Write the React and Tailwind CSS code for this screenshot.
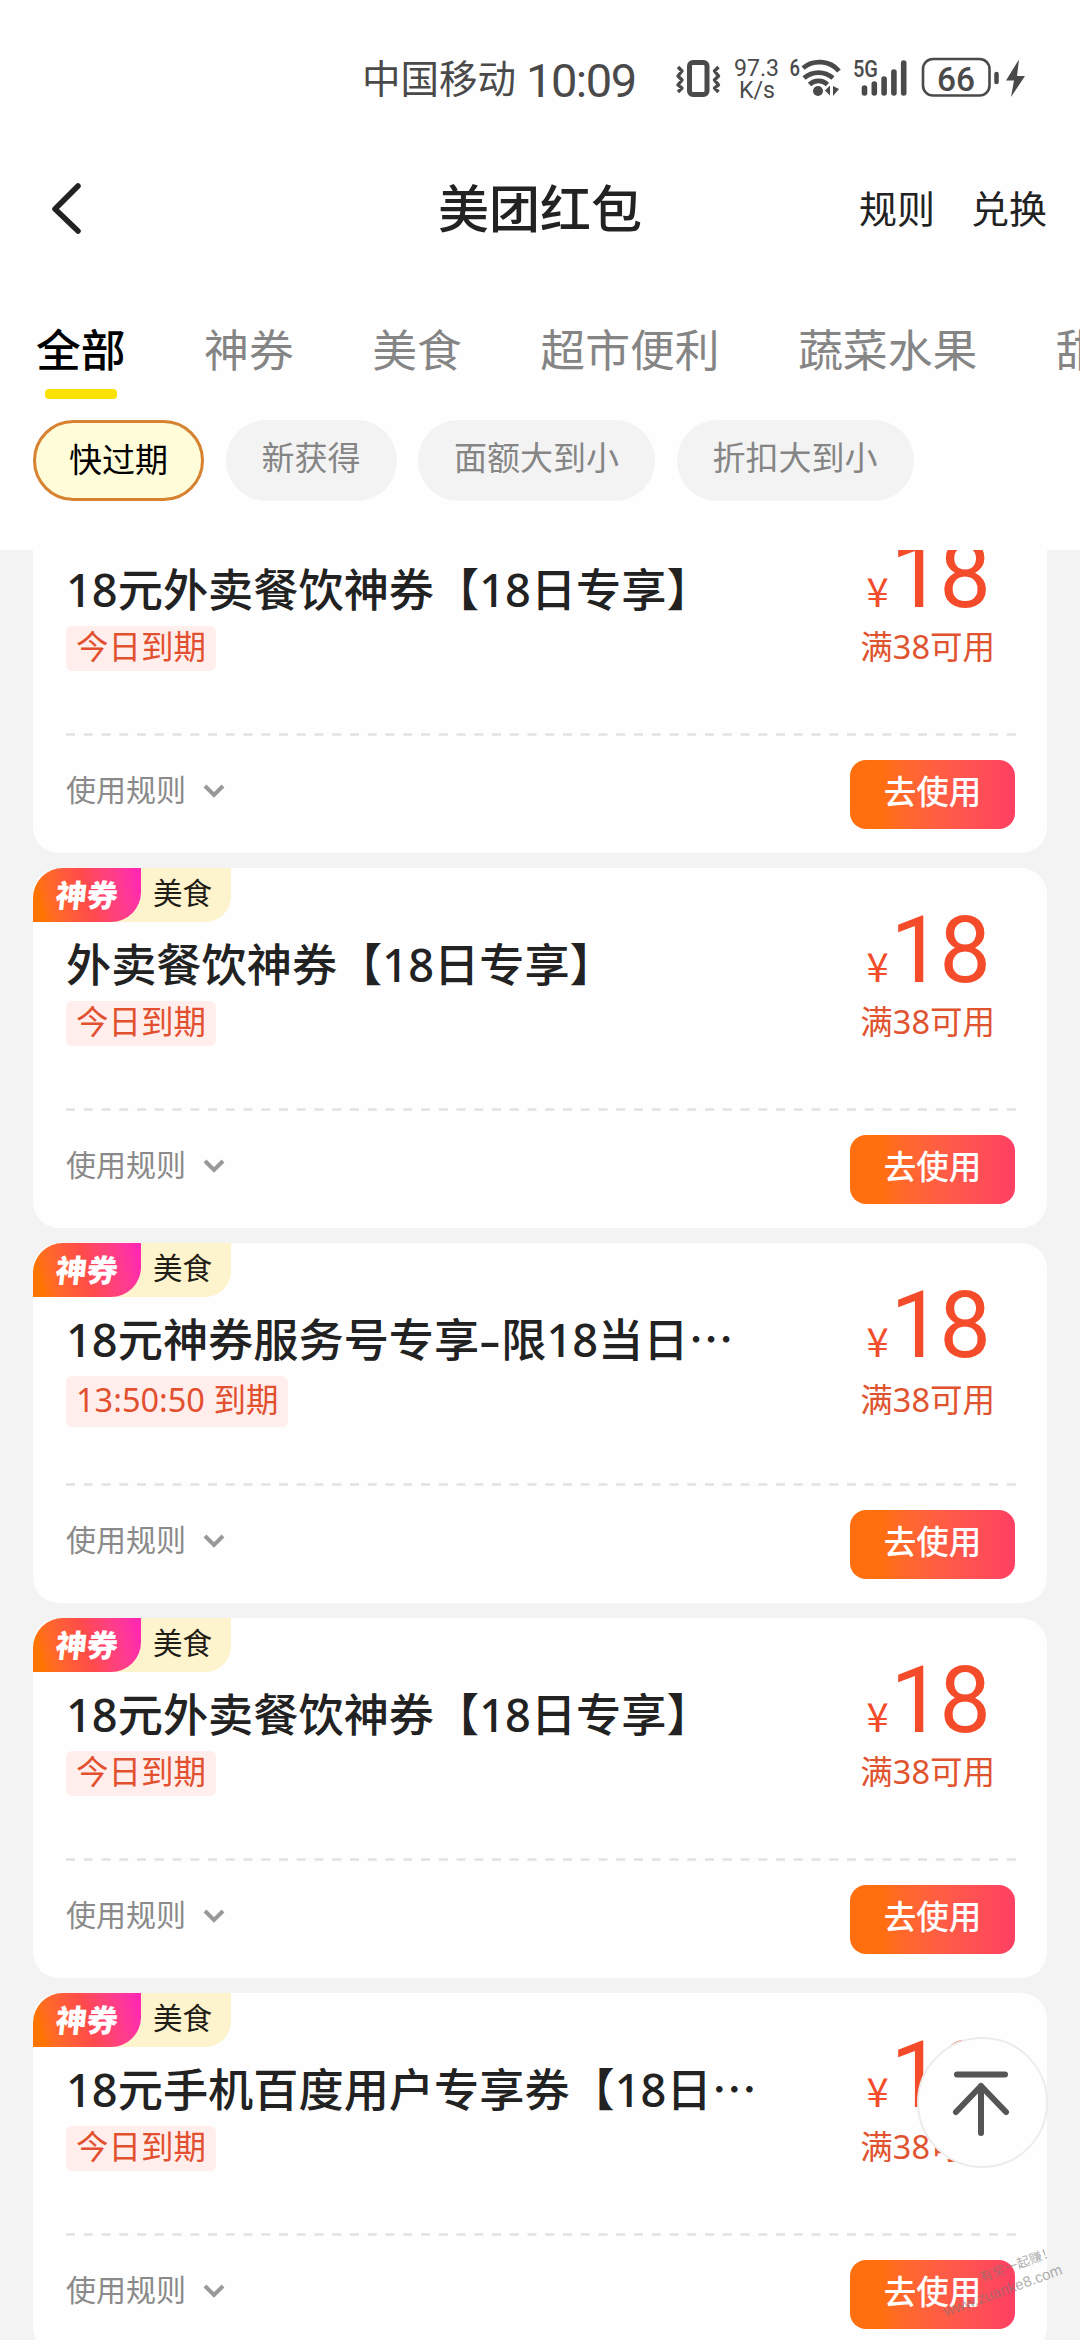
const cards = [
  { title: "18元外卖餐饮神券【18日专享】", due: "今日到期" },
  { title: "外卖餐饮神券【18日专享】", due: "今日到期" },
  { title: "18元神券服务号专享-限18当日", more: true, due: "13:50:50 到期", tall: true },
  { title: "18元外卖餐饮神券【18日专享】", due: "今日到期" },
  { title: "18元手机百度用户专享券【18日", more: true, due: "今日到期" },
];

const tabs = ["神券", "美食", "超市便利", "蔬菜水果", "甜点饮品"];
const filters = ["新获得", "面额大到小", "折扣大到小"];

function StatusIcons() {
  return (
    <svg className="ml-[38px] h-[44px] w-[356px] shrink-0 overflow-visible" viewBox="672 58 356 44" fill="none" stroke="#4a4a4a">
      <rect x="688.5" y="63.500" width="17.5" height="32" rx="3.5" strokeWidth="5" />
      <path d="M677 68l4 4-4 5 4 4-4 5 4 3-4 4M717.500 68l-4 4 4 5-4 4 4 5-4 3 4 4" strokeWidth="3.4" strokeLinejoin="round" />
      <g fill="#4a4a4a" stroke="none" fontFamily="Roboto, sans-serif">
        <text x="733" y="77" fontSize="24" textLength="45" lengthAdjust="spacingAndGlyphs">97.3</text>
        <text x="738" y="99" fontSize="23.500" textLength="36" lengthAdjust="spacingAndGlyphs">K/s</text>
        <text x="788.5" y="77" fontSize="23" fontWeight="500" textLength="10.5" lengthAdjust="spacingAndGlyphs">6</text>
        <text x="852" y="78" fontSize="23" fontWeight="500" textLength="25" lengthAdjust="spacingAndGlyphs">5G</text>
        <text x="936" y="91.500" fontSize="34" fontWeight="500" textLength="38" lengthAdjust="spacingAndGlyphs">66</text>
      </g>
      <path d="M802 69a26 26 0 0 1 36 3M803 79a22 22 0 0 1 29 0M808.500 85.500a13 13 0 0 1 18 0" strokeWidth="4.800" />
      <circle cx="817" cy="92" r="5" fill="#4a4a4a" stroke="none" />
      <path d="M829 86.500v10l-5-5zM832 87l6 3-6 7z" fill="#4a4a4a" stroke="none" />
      <path d="M863.500 89v5M873.300 85v9M883.100 80v14M892.900 73v21M902.700 64v30" strokeWidth="5.600" strokeLinecap="round" />
      <rect x="922" y="60" width="66.500" height="36.500" rx="10" strokeWidth="2.600" />
      <path d="M995.500 75v8" strokeWidth="4.500" strokeLinecap="round" />
      <path d="M1018 60.500l-13 21h8l-3 16.500 14-21h-8z" fill="#4a4a4a" stroke="none" />
    </svg>
  );
}

function Card({ title, more, due, tall }) {
  const [head, tail] = title.split("-");
  return (
    <section className="relative flex h-[360px] shrink-0 flex-col rounded-[26px] bg-[#fefefe] px-[33px]">
      <div className="-mx-[33px] flex h-[54px] w-[198px] rounded-tl-[30px] rounded-br-[26px] bg-[#fdf3cc]">
        <div className="flex w-[108px] items-center justify-center rounded-tl-[30px] rounded-br-[30px] bg-linear-75 from-[#ff7300] from-10% via-[#ff4a4a] via-50% to-[#ff28b0] to-95%">
          <span className="-skew-x-6 text-[31px] leading-none font-black text-white">神券</span>
        </div>
        <span className="ml-3 text-[29.5px] leading-[50px] text-[#1f1d16]">美食</span>
      </div>
      <div className="flex h-[186px] justify-between">
        <div className="flex flex-col items-start">
          <h2 className="mt-[16px] h-[63px] text-[45.2px] leading-[54px] font-medium whitespace-nowrap text-[#222]">
            {head}
            {tail && <span className="inline-block w-[22px] scale-x-150 text-center leading-none">-</span>}
            {tail}
            {more && <span className="font-['Noto_Sans_CJK_SC'] leading-none">⋯</span>}
          </h2>
          <span className={(tall ? "h-[51px] leading-[47px]" : "h-[45px] leading-[41px]") + " rounded-md bg-[#ffeeec] px-[10px] text-[32.5px] whitespace-nowrap text-[#e2502f]"}>
            {due}
          </span>
        </div>
        <div className="mr-[19px] flex flex-col items-end text-[#f44c2a]">
          <div className="mr-[7px] flex h-[79px] items-baseline">
            <span className="mr-[2px] font-['Noto_Sans_CJK_SC'] text-[40px] leading-none">¥</span>
            <span className="font-['Roboto'] text-[92px] leading-[58px] tracking-[-3px]">18</span>
          </div>
          <span className={(tall ? "leading-[47px]" : "leading-[41px]") + " text-[32.5px] text-[#e0532f]"}>满38可用</span>
        </div>
      </div>
      <svg className="h-[3px] w-[950px] shrink-0" viewBox="0 0 950 3">
        <path d="M0 1.500H950" stroke="#e2e2e2" strokeWidth="2.500" strokeDasharray="9 8.750" />
      </svg>
      <div className="-mr-px flex items-start justify-between">
        <div className="flex h-[106px] items-center gap-[17px] text-[30px] text-[#8a8a8a]">
          使用规则
          <svg className="mt-1 h-4 w-[22px]" viewBox="0 0 22 16" fill="none" stroke="#999" strokeWidth="4">
            <path d="M2 3l9 9 9-9" />
          </svg>
        </div>
        <button className="mt-[24px] h-[69px] w-[165px] rounded-2xl bg-linear-to-r from-[#ff6f0f] from-20% to-[#ff3f63] pb-1 text-[32.5px] font-medium text-white">去使用</button>
      </div>
    </section>
  );
}

export default function App() {
  return (
    <div className="relative flex h-[2340px] w-[1080px] flex-col overflow-hidden bg-[#f3f3f3] font-['Noto_Sans','Noto_Sans_CJK_SC',sans-serif]">
      <header className="z-10 flex h-[550px] shrink-0 flex-col bg-[#fefefe]">
        <div className="flex h-[158px] items-center pl-[362px] text-[#4a4a4a]">
          <span className="text-[38.5px] whitespace-nowrap">中国移动</span>
          <span className="ml-[10px] w-[109px] pt-1 font-['Roboto'] text-[47px] tracking-[-1.5px]">10:09</span>
          <StatusIcons />
        </div>
        <div className="grid h-[100px] grid-cols-3 items-center px-[33px]">
          <svg className="ml-[17px] h-[52px] w-[34px]" viewBox="0 0 34 52" fill="none" stroke="#222" strokeWidth="5.500" strokeLinecap="round" strokeLinejoin="round">
            <path d="M28 4L5 27l23 22" />
          </svg>
          <h1 className="text-center text-[51px] font-medium whitespace-nowrap text-[#222]">美团红包</h1>
          <div className="flex justify-end gap-9 text-[38px] text-[#222]">
            <span>规则</span>
            <span>兑换</span>
          </div>
        </div>
        <nav className="mt-[59px] flex h-[104px] gap-[78.5px] pl-[36px] text-[44.8px] leading-[66px] whitespace-nowrap text-[#858585]">
          <div className="flex flex-col items-center font-medium text-black">
            <span>全部</span>
            <span className="mt-[6px] h-[10px] w-[72px] rounded-sm bg-[#fae100]" />
          </div>
          {tabs.map((t) => (
            <span key={t}>{t}</span>
          ))}
        </nav>
        <div className="flex gap-[21.5px] pl-[33px] text-[33px] leading-[76px] text-[#858585]">
          <span className="-mt-px h-[81px] w-[171px] rounded-full border-[3px] border-[#d68230] bg-[#fffcd9] text-center leading-[73px] text-black">快过期</span>
          {filters.map((f) => (
            <span key={f} className="-mt-px h-[81px] rounded-full bg-[#f3f3f3] px-9">{f}</span>
          ))}
        </div>
      </header>
      <main className="-mt-[57px] flex flex-col gap-[15px] px-[33px]">
        {cards.map((c, i) => (
          <Card key={i} {...c} />
        ))}
      </main>
      <button className="absolute top-[2037px] left-[917px] z-20 size-[131px] rounded-full border-2 border-[#ececec] bg-[#fefefe]">
        <svg className="size-full" viewBox="919 2039 127 127" fill="none" stroke="#555" strokeWidth="6" strokeLinecap="round" strokeLinejoin="round">
          <path d="M957 2074.500h48M981 2133v-47M956 2112l25-26 25 26" />
        </svg>
      </button>
      <div className="absolute top-[2263px] left-[937px] z-20 w-[120px] -rotate-20 text-right font-['Liberation_Sans','Noto_Sans_CJK_SC'] text-[15px] leading-[19px] whitespace-nowrap text-[#7779]">
        <div className="-mr-[4px] text-[13px]">有奖一起赚！</div>
        <div className="mr-[3px]">www.zuanke8.com</div>
      </div>
    </div>
  );
}
